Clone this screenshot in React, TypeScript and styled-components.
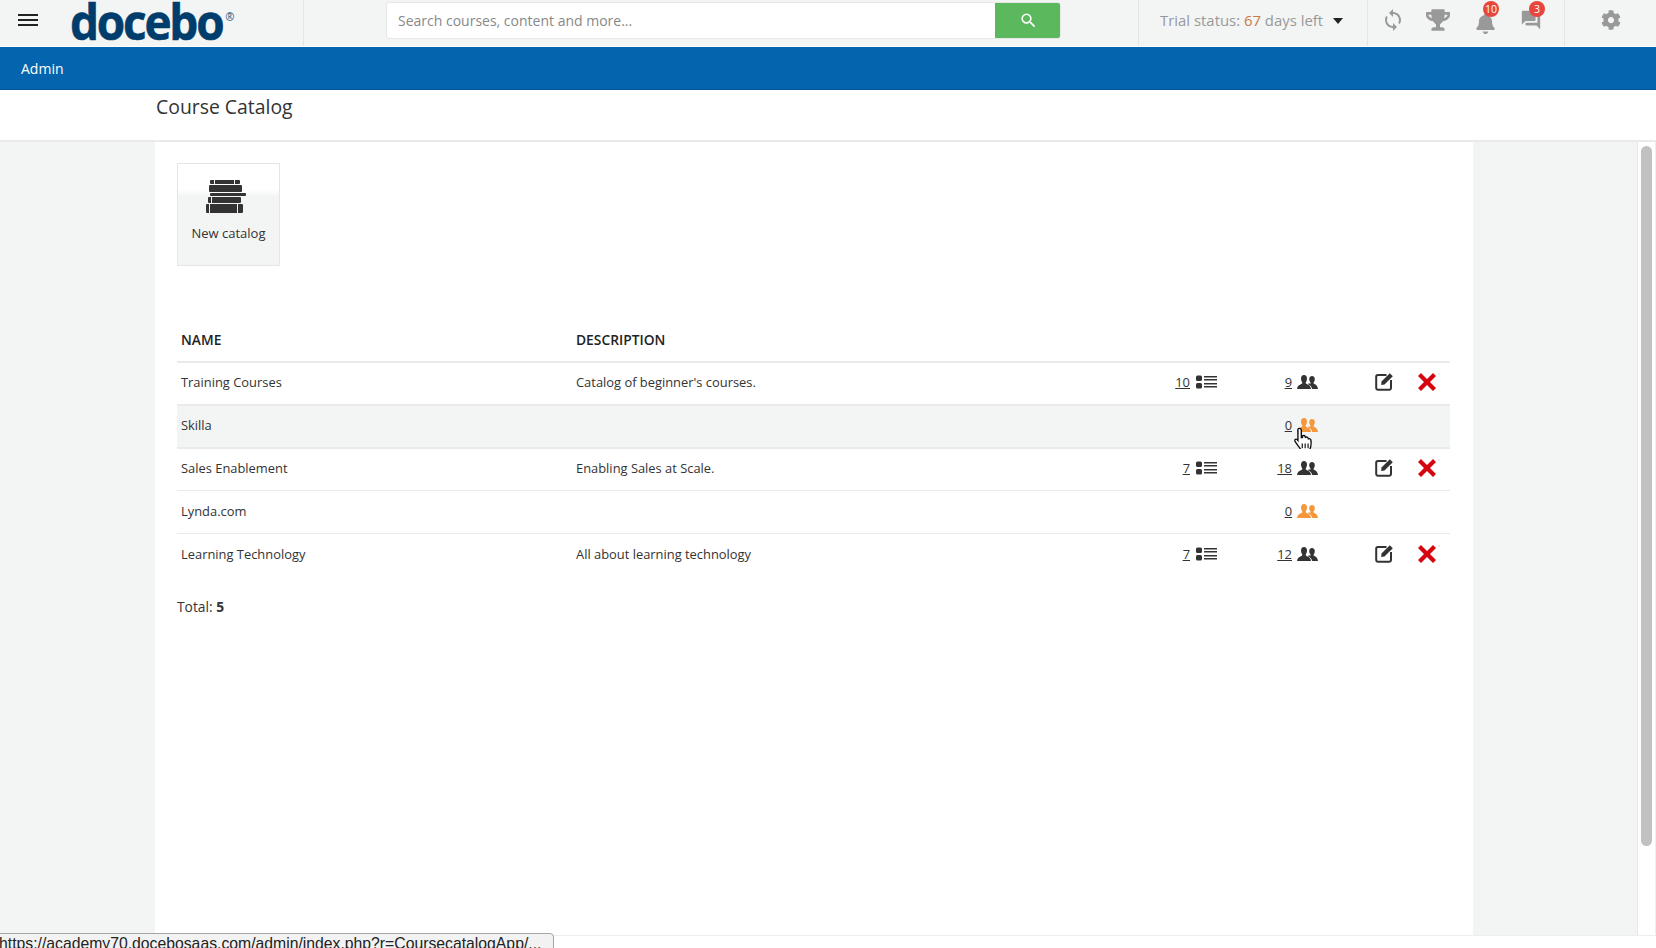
import React from 'react';
import styled, { createGlobalStyle } from 'styled-components';
import { FaTrophy, FaBell, FaCog } from 'react-icons/fa';
import { MdSearch, MdQuestionAnswer, MdSync } from 'react-icons/md';

const Global = createGlobalStyle`
  html, body { margin: 0; padding: 0; height: 100%; overflow: hidden; background: #fff; }
  body { font-family: "Open Sans", "Liberation Sans", sans-serif; color: #333; font-size: 13px; }
  * { box-sizing: border-box; }
`;

const Page = styled.div`
  width: 1656px;
  height: 948px;
  display: flex;
  flex-direction: column;
  position: relative;
  overflow: hidden;
`;

const Header = styled.header`
  height: 47px;
  flex: none;
  display: flex;
  background: #f3f5f4;
  border-bottom: 1px solid #fff;
`;

const Section = styled.div<{ $w: number }>`
  width: ${p => p.$w}px;
  height: 46px;
  flex: none;
  display: flex;
  align-items: center;
  border-right: 1px solid #e4e6e5;
`;

const BrandSection = styled(Section)`
  padding-left: 18px;
  gap: 32px;
`;

const Burger = styled.div`
  width: 20px;
  display: flex;
  flex-direction: column;
  gap: 3px;
  margin-top: -6px;
  & > span { display: block; height: 2px; background: #222; }
`;

const Logo = styled.div`
  font-family: "Open Sans", sans-serif;
  font-weight: 700;
  font-size: 50px;
  line-height: 46px;
  letter-spacing: -2.4px;
  color: #003c6c;
  transform: scaleX(0.918);
  transform-origin: left center;
  white-space: nowrap;
  margin-top: -4px;
  -webkit-text-stroke: 0.6px #003c6c;
`;

const LogoMark = styled.sup`
  font-size: 12px;
  letter-spacing: 0;
  vertical-align: 19px;
  line-height: 0;
  margin-left: 3px;
  -webkit-text-stroke: 0;
  color: #4d7898;
`;

const SearchSection = styled(Section)`
  padding-left: 82px;
`;

const SearchField = styled.div`
  width: 675px;
  height: 37px;
  margin-top: -6px;
  display: flex;
  background: #fff;
  border: 1px solid #e6e8e7;
  border-radius: 3px;
  overflow: hidden;
`;

const SearchText = styled.div`
  flex: 1;
  padding-left: 11px;
  font-size: 14px;
  line-height: 35px;
  color: #888;
`;

const SearchButton = styled.div`
  width: 65px;
  background: #5cb85c;
  display: flex;
  align-items: center;
  justify-content: center;
  color: #fff;
  font-size: 19px;
  padding-left: 1px;
`;

const TrialSection = styled(Section)`
  padding-left: 21px;
  font-size: 14.9px;
  color: #999;
  & > span { margin-top: -6px; }
`;

const TrialDays = styled.b`
  font-weight: 400;
  color: #c9794a;
`;

const Caret = styled.i`
  width: 0;
  height: 0;
  margin: -4px 0 0 10px;
  border-left: 5.5px solid transparent;
  border-right: 5.5px solid transparent;
  border-top: 6px solid #222;
`;

const ToolsSection = styled(Section)`
  padding-left: 2px;
`;

const ToolSlot = styled.div`
  width: 46px;
  height: 40px;
  margin-top: -6px;
  display: flex;
  align-items: center;
  justify-content: center;
  color: #999;
  position: relative;
`;

const Badge = styled.span<{ $x: number }>`
  position: absolute;
  top: 1px;
  left: ${p => p.$x}px;
  min-width: 16px;
  height: 16px;
  border-radius: 50%;
  background: #e8463c;
  color: #fff;
  font-size: 10.5px;
  line-height: 16px;
  text-align: center;
`;

const GearSection = styled.div`
  flex: 1;
  height: 46px;
  display: flex;
  align-items: center;
  justify-content: center;
  color: #999;
  padding-bottom: 6px;
`;

const AdminBar = styled.nav`
  height: 43px;
  flex: none;
  background: #0465ae;
  border-bottom: 1px solid #04558f;
  color: #fff;
  font-size: 14px;
  line-height: 44px;
  padding-left: 21px;
`;

const TitleBand = styled.div`
  height: 52px;
  flex: none;
  background: #fff;
  border-bottom: 2px solid #e9ebea;
  padding-left: 156px;
`;

const Title = styled.h1`
  margin: 0;
  font-weight: 400;
  font-size: 19.4px;
  line-height: 34px;
  color: #333;
`;

const Body = styled.div`
  height: 794px;
  flex: none;
  display: flex;
  border-bottom: 1px solid #eee;
`;

const Gutter = styled.div<{ $w: number }>`
  width: ${p => p.$w}px;
  flex: none;
  background: #f3f5f4;
`;

const Content = styled.main`
  flex: 1;
  background: #fff;
  padding: 21px 23px 0 22px;
`;

const Tile = styled.div`
  width: 103px;
  height: 103px;
  border: 1px solid #e4e6e5;
  background: linear-gradient(#fff 0, #fff 25%, #f3f5f4 32%);
  display: flex;
  flex-direction: column;
  align-items: center;
  padding-top: 16px;
  font-size: 13px;
  color: #333;
`;

const TileIcon = styled.svg`
  width: 40px;
  height: 34px;
  margin-bottom: 10px;
  margin-right: 5px;
`;

const HeadRow = styled.div`
  margin-top: 53px;
  height: 44px;
  display: flex;
  align-items: center;
  padding: 0 0 1px 4px;
  border-bottom: 2px solid #e9ebea;
  font-weight: 600;
  font-size: 13.8px;
  color: #222;
  & > span:first-child { width: 395px; }
`;

const Row = styled.div<{ $hover?: boolean; $thick?: boolean; $last?: boolean }>`
  display: grid;
  grid-template-columns: 395px 1fr 101px 101px 87px 45px;
  align-items: center;
  height: 42.75px;
  padding-left: 4px;
  padding-bottom: 3px;
  background: ${p => (p.$hover ? '#f3f5f4' : '#fff')};
  border-bottom: ${p => (p.$last ? 0 : p.$thick ? 2 : 1)}px solid #e9ebea;
  position: relative;
  font-size: 12.9px;
`;

const Count = styled.div`
  display: flex;
  justify-content: flex-end;
  align-items: center;
  gap: 5px;
  & > u { color: #333; }
`;

const EditCell = styled.div`
  display: flex;
  justify-content: center;
  padding-left: 45px;
  color: #333;
`;

const DeleteCell = styled.div`
  display: flex;
  justify-content: center;
  padding-right: 2px;
  position: relative;
`;

const Total = styled.div`
  margin-top: 20px;
  font-size: 13.8px;
  & > b { font-weight: 700; }
`;

const Cursor = styled.svg`
  position: absolute;
  left: 1115px;
  top: 20px;
  width: 24px;
  height: 28px;
`;

const Scroll = styled.div`
  width: 19px;
  flex: none;
  background: #fff;
  border-left: 1px solid #e8e8e8;
  border-right: 1px solid #efefef;
  padding: 4px 3px 0;
`;

const Thumb = styled.div`
  height: 700px;
  border-radius: 6px;
  background: #c1c1c1;
`;

const StatusBubble = styled.div`
  position: absolute;
  left: -6px;
  bottom: -6px;
  width: 560px;
  height: 21px;
  border: 1px solid #a5a5a5;
  border-radius: 0 4px 0 0;
  background: #f2f2f2;
  font-family: "Liberation Sans", Arial, sans-serif;
  font-size: 15.75px;
  line-height: 19px;
  color: #222;
  padding-left: 4px;
  white-space: nowrap;
  overflow: hidden;
`;

const ListIcon = ({ color = '#333' }: { color?: string }) => (
  <svg width="21" height="14" viewBox="0 0 21 14" fill={color} style={{ marginLeft: 1 }}>
    <rect x="0" y="0.5" width="6" height="5.5" rx="1.5" />
    <rect x="0" y="8" width="6" height="5.5" rx="1.5" />
    <rect x="8" y="1" width="13" height="1.5" />
    <rect x="8" y="4" width="13" height="1.5" />
    <rect x="8" y="8" width="13" height="1.5" />
    <rect x="8" y="11" width="13" height="1.5" />
  </svg>
);

const UsersIcon = ({ color = '#333' }: { color?: string }) => (
  <svg width="21" height="14" viewBox="0 0 21 14" fill={color}>
    <path d="M7 0C9 0 10 1.600 10 3.500C10 5 9.500 6.300 8.800 7.200V8.600C10 9.400 12 10 13 11.200C13.600 12 13.800 13 14 14H0C.2 13 .4 12 1 11.200C2 10 4 9.400 5.200 8.600V7.200C4.500 6.300 4 5 4 3.500C4 1.600 5 0 7 0Z" />
    <path d="M15 1C16.700 1 17.800 2.400 17.800 4C17.800 5.400 17.300 6.600 16.600 7.400V8.600C17.800 9.300 19 9.800 19.800 10.800C20.500 11.800 20.800 13 21 14H15.200C15 12 13.500 10.400 11 9.200L11.800 8.300C12.500 8.600 13.200 8.700 13.500 8.600V7.400C12.800 6.600 12.200 5.400 12.200 4C12.200 2.400 13.300 1 15 1Z" />
  </svg>
);

const EditIcon = () => (
  <svg width="19" height="19" viewBox="0 0 19 19" fill="none">
    <path d="M11.500 3H3A1.800 1.800 0 0 0 1.200 4.800V16A1.800 1.800 0 0 0 3 17.800H14.200A1.800 1.800 0 0 0 16 16V8" stroke="#333" strokeWidth="2" />
    <path d="M6.500 9.500L14.800 1.200L17.800 4.200L9.500 12.500L6.200 13Z" fill="#333" />
  </svg>
);

const DeleteIcon = () => (
  <svg width="26" height="18" viewBox="-13 -9 26 18">
    <path d="M-9 -6L-6 -9L0 -3L6 -9L9 -6L3 0L9 6L6 9L0 3L-6 9L-9 6L-3 0Z" fill="#d5060f" />
    <rect x="11.500" y="-8.500" width="1" height="1" fill="#bbb" />
  </svg>
);

type Cat = { name: string; desc: string; courses?: number; users: number; thick?: boolean; hover?: boolean };

const cats: Cat[] = [
  { name: 'Training Courses', desc: "Catalog of beginner's courses.", courses: 10, users: 9, thick: true },
  { name: 'Skilla', desc: '', users: 0, hover: true, thick: true },
  { name: 'Sales Enablement', desc: 'Enabling Sales at Scale.', courses: 7, users: 18 },
  { name: 'Lynda.com', desc: '', users: 0 },
  { name: 'Learning Technology', desc: 'All about learning technology', courses: 7, users: 12 },
];

export default function App() {
  return (
    <Page>
      <Global />
      <Header>
        <BrandSection $w={304}>
          <Burger><span /><span /><span /></Burger>
          <Logo>docebo<LogoMark>®</LogoMark></Logo>
        </BrandSection>
        <SearchSection $w={835}>
          <SearchField>
            <SearchText>Search courses, content and more...</SearchText>
            <SearchButton><MdSearch /></SearchButton>
          </SearchField>
        </SearchSection>
        <TrialSection $w={229}>
          <span>Trial status: <TrialDays>67</TrialDays> days left</span>
          <Caret />
        </TrialSection>
        <ToolsSection $w={197}>
          <ToolSlot><MdSync size={24} /></ToolSlot>
          <ToolSlot style={{ left: -1 }}><FaTrophy size={24} /></ToolSlot>
          <ToolSlot><FaBell size={21} style={{ marginTop: 6 }} /><Badge $x={21}>10</Badge></ToolSlot>
          <ToolSlot><MdQuestionAnswer size={22} /><Badge $x={21}>3</Badge></ToolSlot>
        </ToolsSection>
        <GearSection><FaCog size={20} /></GearSection>
      </Header>
      <AdminBar>Admin</AdminBar>
      <TitleBand><Title>Course Catalog</Title></TitleBand>
      <Body>
        <Gutter $w={155} />
        <Content>
          <Tile>
            <TileIcon viewBox="0 0 40 34" fill="#333">
              <rect x="4" y="0" width="30" height="4" rx="1" />
              <rect x="3" y="5" width="33" height="7" rx="1" />
              <rect x="4" y="13" width="36" height="3" rx="1" />
              <rect x="2" y="17" width="33" height="6" rx="1" />
              <rect x="0" y="24" width="37" height="9" rx="1" />
              <rect x="3" y="24" width="1" height="9" fill="#f3f5f4" />
              <rect x="31" y="24" width="1" height="9" fill="#f3f5f4" />
              <rect x="5" y="17" width="1" height="6" fill="#f3f5f4" />
              <rect x="8" y="0" width="1" height="4" fill="#f3f5f4" />
              <rect x="28" y="0" width="1" height="4" fill="#f3f5f4" />
            </TileIcon>
            New catalog
          </Tile>
          <HeadRow><span>NAME</span><span>DESCRIPTION</span></HeadRow>
          {cats.map((c, i) => (
            <Row key={c.name} $hover={c.hover} $thick={c.thick} $last={i === cats.length - 1}>
              <span>{c.name}</span>
              <span>{c.desc}</span>
              <Count>
                {c.courses !== undefined && (<><u>{c.courses}</u><ListIcon /></>)}
              </Count>
              <Count>
                <u>{c.users}</u>
                <UsersIcon color={c.courses === undefined ? '#f5973a' : '#333'} />
              </Count>
              <EditCell>{c.courses !== undefined && <EditIcon />}</EditCell>
              <DeleteCell>{c.courses !== undefined && <DeleteIcon />}</DeleteCell>
              {c.hover && (
                <Cursor viewBox="0 0 20 24">
                  <path d="M6 2c1 0 1.700.7 1.700 1.700V10l1-.2V8.500c.9-.7 2-.4 2.300.4l.2.8c1-.5 2-.2 2.300.700l.2.600c1-.4 2 0 2.200 1 .3 1.500.3 4-.2 6-.3 1.200-.8 2-1 3H7.500c-.3-1.300-1.400-2.500-2.500-4-1-1.300-2.300-3-2.800-4.200-.4-1.200.9-2 1.900-1.200l.7.800V3.700C4.800 2.700 5 2 6 2z" fill="#fff" stroke="#111" strokeWidth="1.200" />
                  <path d="M8.500 15v4M11 15v4M13.500 15v4" stroke="#111" strokeWidth="1" />
                </Cursor>
              )}
            </Row>
          ))}
          <Total>Total: <b>5</b></Total>
        </Content>
        <Gutter $w={164} />
        <Scroll><Thumb /></Scroll>
      </Body>
      <StatusBubble>https://academy70.docebosaas.com/admin/index.php?r=CoursecatalogApp/...</StatusBubble>
    </Page>
  );
}
